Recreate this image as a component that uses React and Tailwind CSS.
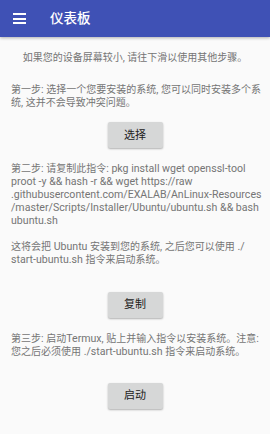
import React from 'react';

const FONT = { fontFamily: 'Roboto, "Noto Sans CJK SC", sans-serif' };

// Latin runs are set a touch larger than the CJK glyphs, as on the device
function Line({ text }) {
  const parts = text.split(/([\u3000-\u303f\u4e00-\u9fff]+)/).filter(Boolean);
  return (
    <div className="whitespace-pre">
      {parts.map((p, i) =>
        /[\u3000-\u303f\u4e00-\u9fff]/.test(p) ? (
          <span key={i}>{p}</span>
        ) : (
          <span key={i} className="text-[10.6px]">{p}</span>
        )
      )}
    </div>
  );
}

function Para({ lines, className = '' }) {
  return (
    <div className={className}>
      {lines.map((l, i) => (
        <Line key={i} text={l} />
      ))}
    </div>
  );
}

function Btn({ label, className = '' }) {
  return (
    <div className={`flex justify-center ${className}`}>
      <button className="w-[55px] h-[26px] rounded-[2px] bg-[#d6d7d7] shadow-[0_1px_2px_rgba(0,0,0,0.3)] text-[11px] text-[#222]">
        {label}
      </button>
    </div>
  );
}

export default function App() {
  return (
    <div className="w-[270px] h-[434px] bg-[#fafafa] flex flex-col overflow-hidden" style={FONT}>
      {/* Toolbar */}
      <header className="h-[37px] bg-[#3f51b5] flex items-center shrink-0 shadow-[0_1px_3px_rgba(0,0,0,0.3)]">
        <div className="ml-[13px] w-[13px] flex flex-col gap-[2.5px]">
          <div className="h-[2px] bg-white" />
          <div className="h-[2px] bg-white" />
          <div className="h-[2px] bg-white" />
        </div>
        <h1 className="ml-[24px] text-[13.5px] font-medium text-white">仪表板</h1>
      </header>

      <main className="px-[11px] text-[10px] leading-[13px] text-[#757575]">
        <div className="mt-[13.5px] flex justify-center">
          <Line text="如果您的设备屏幕较小, 请往下滑以使用其他步骤。" />
        </div>

        <Para
          className="mt-[19px]"
          lines={['第一步: 选择一个您要安装的系统, 您可以同时安装多个系', '统, 这并不会导致冲突问题。']}
        />
        <Btn label="选择" className="mt-[13.5px]" />

        <Para
          className="mt-[13.5px]"
          lines={[
            '第二步: 请复制此指令: pkg install wget openssl-tool',
            'proot -y && hash -r && wget https://raw',
            '.githubusercontent.com/EXALAB/AnLinux-Resources',
            '/master/Scripts/Installer/Ubuntu/ubuntu.sh && bash',
            'ubuntu.sh',
          ]}
        />
        <Para
          className="mt-[13.5px]"
          lines={['这将会把 Ubuntu 安装到您的系统, 之后您可以使用 ./', 'start-ubuntu.sh 指令来启动系统。']}
        />
        <Btn label="复制" className="mt-[25.5px]" />

        <Para
          className="mt-[14.5px]"
          lines={['第三步: 启动Termux, 贴上并输入指令以安装系统。注意:', '您之后必须使用 ./start-ubuntu.sh 指令来启动系统。']}
        />
        <Btn label="启动" className="mt-[24.5px]" />
      </main>
    </div>
  );
}
